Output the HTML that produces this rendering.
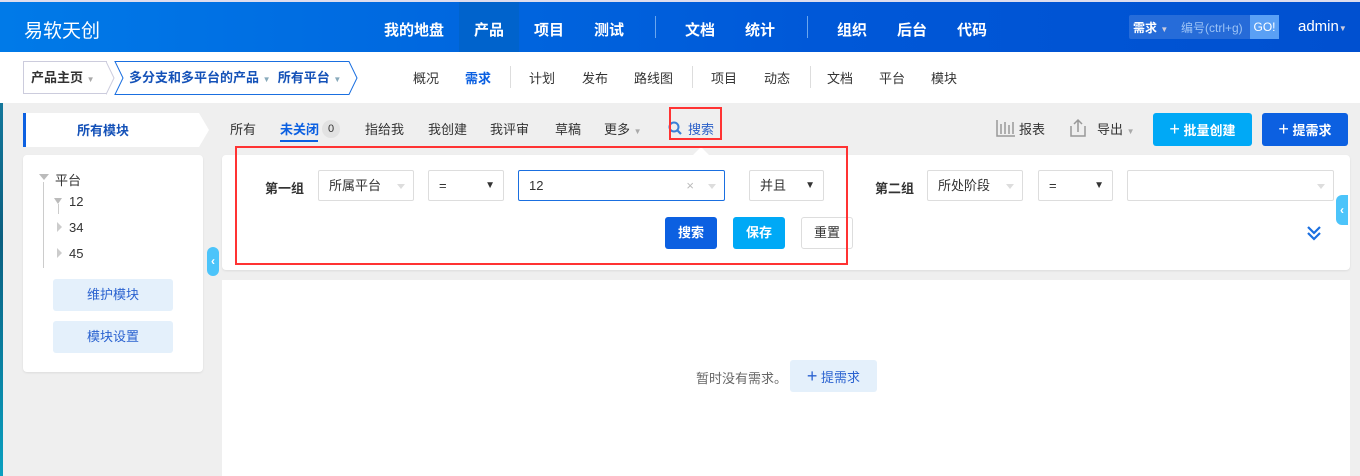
<!DOCTYPE html>
<html><head><meta charset="utf-8"><style>
*{margin:0;padding:0;box-sizing:border-box}
body{width:1360px;height:476px;overflow:hidden;background:#efefef;font-family:"Liberation Sans","Noto Sans CJK SC",sans-serif;font-size:13px;color:#333;position:relative}
.a{position:absolute}
.hdr{left:0;top:0;width:1360px;height:52px;background:linear-gradient(90deg,#007ae8,#0058d8 60%,#0050d0);border-top:2px solid #dde}
.hdr .t{color:#fff;font-size:15px;font-weight:bold;top:17px}
.sub{left:0;top:52px;width:1360px;height:51px;background:#fff}
.sub .t{top:16px;font-size:13px}
.sep{width:1px;background:#ddd}
.tab{top:119px;font-size:13px}
.panel{background:#fff;border-radius:4px;box-shadow:0 1px 2px rgba(0,0,0,.08)}
.sel{border:1px solid #ddd;border-radius:2px;height:31px;top:170px;background:#fff;padding:0 10px;line-height:29px;font-size:13px}
.btn{border-radius:3px;height:32px;top:217px;color:#fff;text-align:center;line-height:32px;font-size:13px}
.caret{border-left:4px solid transparent;border-right:4px solid transparent;border-top:5px solid #ccc;width:0;height:0}
.dt{position:absolute;right:8px;top:0;font-size:10px;line-height:29px}
</style></head><body>
<div class="a" style="left:0;top:0;width:3px;height:476px;background:linear-gradient(#1a8ab0,#0b5f80 50%,#0aa0c0)"></div>
<div class="a hdr">
<div class="a" style="left:459px;top:0;width:60px;height:50px;background:#0063cc"></div>
<div class="a t" style="left:24px;top:14px;font-size:19px;font-weight:normal">易软天创</div>
<div class="a t" style="left:384px">我的地盘</div>
<div class="a t" style="left:474px">产品</div>
<div class="a t" style="left:534px">项目</div>
<div class="a t" style="left:594px">测试</div>
<div class="a" style="left:655px;top:14px;width:1px;height:22px;background:#6aa6ee"></div>
<div class="a t" style="left:685px">文档</div>
<div class="a t" style="left:745px">统计</div>
<div class="a" style="left:807px;top:14px;width:1px;height:22px;background:#6aa6ee"></div>
<div class="a t" style="left:837px">组织</div>
<div class="a t" style="left:897px">后台</div>
<div class="a t" style="left:957px">代码</div>
<div class="a" style="left:1129px;top:13px;width:150px;height:24px;background:rgba(255,255,255,.15);border-radius:2px"></div>
<div class="a" style="left:1133px;top:17px;color:#fff;font-size:12px;font-weight:bold">需求 <span style="font-size:8px;color:#ccd">▼</span></div>
<div class="a" style="left:1181px;top:17px;color:#9cc3f5;font-size:12px">编号(ctrl+g)</div>
<div class="a" style="left:1250px;top:13px;width:29px;height:24px;background:#5aa0f5;color:#fff;font-size:12px;line-height:24px;text-align:center">GO!</div>
<div class="a" style="left:1298px;top:16px;color:#fff;font-size:15px">admin<span style="font-size:8px;color:#ccd">▼</span></div>
</div>
<div class="a sub">
<div class="a" style="left:23px;top:9px;width:84px;height:33px;border:1px solid #ccd;border-right:none;padding:0 7px;line-height:31px;font-weight:bold">产品主页 <span style="color:#aaa;font-size:8px">▼</span></div>
<svg class="a" style="left:106px;top:9px" width="254" height="34"><path d="M0 0.5 L8 17 L0 33.5" fill="none" stroke="#ccd"/><path d="M9 0.5 H243 L251 17 L243 33.5 H9 L17 17 Z" fill="#fff" stroke="#1a6fe0"/></svg>
<div class="a" style="left:129px;top:9px;line-height:33px;color:#1552b8;font-weight:bold">多分支和多平台的产品 <span style="font-size:8px;color:#8ab">▼</span> &nbsp;所有平台 <span style="font-size:8px;color:#8ab">▼</span></div>
<div class="a t" style="left:413px">概况</div>
<div class="a t" style="left:465px;color:#0c60e1;font-weight:bold">需求</div>
<div class="a sep" style="left:510px;top:14px;height:22px"></div>
<div class="a t" style="left:529px">计划</div>
<div class="a t" style="left:582px">发布</div>
<div class="a t" style="left:634px">路线图</div>
<div class="a sep" style="left:692px;top:14px;height:22px"></div>
<div class="a t" style="left:711px">项目</div>
<div class="a t" style="left:764px">动态</div>
<div class="a sep" style="left:810px;top:14px;height:22px"></div>
<div class="a t" style="left:827px">文档</div>
<div class="a t" style="left:879px">平台</div>
<div class="a t" style="left:931px">模块</div>
</div>
<svg class="a" style="left:23px;top:113px" width="190" height="34"><path d="M0 0 H176 L186 17 L176 34 H0Z" fill="#fff"/><rect x="0" y="0" width="3" height="34" fill="#0c60e1"/></svg>
<div class="a" style="left:77px;top:120px;color:#1552b8;font-weight:bold;font-size:13px">所有模块</div>
<div class="a tab" style="left:230px">所有</div>
<div class="a tab" style="left:280px;color:#0c60e1;font-weight:bold">未关闭</div>
<div class="a" style="left:280px;top:140px;width:38px;height:2px;background:#0c60e1"></div>
<div class="a" style="left:322px;top:120px;width:18px;height:18px;border-radius:9px;background:#e2e2e2;font-size:11px;text-align:center;line-height:18px">0</div>
<div class="a tab" style="left:365px">指给我</div>
<div class="a tab" style="left:428px">我创建</div>
<div class="a tab" style="left:490px">我评审</div>
<div class="a tab" style="left:555px">草稿</div>
<div class="a tab" style="left:604px">更多 <span style="font-size:8px;color:#aaa">▼</span></div>
<svg class="a" style="left:668px;top:121px" width="16" height="16"><circle cx="6" cy="6" r="4.5" fill="none" stroke="#3a7fd8" stroke-width="2"/><path d="M9.5 9.5L13 13" stroke="#3a7fd8" stroke-width="2.2"/></svg>
<div class="a tab" style="left:688px;color:#2a5fc8">搜索</div>
<div class="a" style="left:669px;top:107px;width:53px;height:33px;border:2px solid #f33"></div>
<svg class="a" style="left:996px;top:119px" width="20" height="18"><path d="M1 1V17H19M5 5V15M9 3V15M13 6V15M17 3V15" stroke="#999" stroke-width="1.5" fill="none"/></svg>
<div class="a tab" style="left:1019px">报表</div>
<svg class="a" style="left:1068px;top:118px" width="20" height="20"><path d="M3 8V18H17V8M10 14V2M6 6L10 2L14 6" stroke="#999" stroke-width="1.5" fill="none"/></svg>
<div class="a tab" style="left:1097px">导出 <span style="font-size:8px;color:#aaa">▼</span></div>
<div class="a" style="left:1153px;top:113px;width:99px;height:33px;background:#00a9f6;border-radius:3px;color:#fff;font-weight:bold;line-height:33px;text-align:center"><span style="font-size:18px;font-weight:normal">+</span> 批量创建</div>
<div class="a" style="left:1262px;top:113px;width:86px;height:33px;background:#0c60e1;border-radius:3px;color:#fff;font-weight:bold;line-height:33px;text-align:center"><span style="font-size:18px;font-weight:normal">+</span> 提需求</div>

<div class="a panel" style="left:23px;top:155px;width:180px;height:217px"></div>
<div class="a" style="left:39px;top:174px;width:0;height:0;border-left:5px solid transparent;border-right:5px solid transparent;border-top:6px solid #bbb"></div>
<div class="a" style="left:55px;top:170px">平台</div>
<div class="a" style="left:43px;top:182px;width:1px;height:86px;background:#ccc"></div>
<div class="a" style="left:54px;top:198px;width:0;height:0;border-left:4px solid transparent;border-right:4px solid transparent;border-top:6px solid #bbb"></div>
<div class="a" style="left:58px;top:204px;width:1px;height:10px;background:#ccc"></div>
<div class="a" style="left:69px;top:194px">12</div>
<div class="a" style="left:57px;top:222px;width:0;height:0;border-top:5px solid transparent;border-bottom:5px solid transparent;border-left:5px solid #ccc"></div>
<div class="a" style="left:69px;top:220px">34</div>
<div class="a" style="left:57px;top:248px;width:0;height:0;border-top:5px solid transparent;border-bottom:5px solid transparent;border-left:5px solid #ccc"></div>
<div class="a" style="left:69px;top:246px">45</div>
<div class="a" style="left:53px;top:279px;width:120px;height:32px;background:#e4f0fb;border-radius:3px;color:#2a62d0;text-align:center;line-height:32px">维护模块</div>
<div class="a" style="left:53px;top:321px;width:120px;height:32px;background:#e4f0fb;border-radius:3px;color:#2a62d0;text-align:center;line-height:32px">模块设置</div>
<div class="a" style="left:207px;top:247px;width:12px;height:29px;background:#4cc4fa;border-radius:6px;color:#fff;font-size:12px;line-height:29px;text-align:center;font-weight:bold">‹</div>

<div class="a panel" style="left:222px;top:155px;width:1128px;height:115px"></div>
<div class="a" style="left:693px;top:147px;width:0;height:0;border-left:8px solid transparent;border-right:8px solid transparent;border-bottom:8px solid #fff"></div>
<div class="a" style="left:265px;top:178px;font-weight:bold">第一组</div>
<div class="a sel" style="left:318px;width:96px">所属平台<div class="a caret" style="right:8px;top:13px;border-top-color:#ddd"></div></div>
<div class="a sel" style="left:428px;width:76px">=<div class="dt">▼</div></div>
<div class="a sel" style="left:518px;width:207px;border-color:#1a6fe0">12<div class="a" style="right:30px;top:0;color:#bbb">×</div><div class="a caret" style="right:8px;top:13px;border-top-color:#ddd"></div></div>
<div class="a sel" style="left:749px;width:75px">并且<div class="dt">▼</div></div>
<div class="a" style="left:875px;top:178px;font-weight:bold">第二组</div>
<div class="a sel" style="left:927px;width:96px">所处阶段<div class="a caret" style="right:8px;top:13px;border-top-color:#ddd"></div></div>
<div class="a sel" style="left:1038px;width:75px">=<div class="dt">▼</div></div>
<div class="a sel" style="left:1127px;width:207px"><div class="a caret" style="right:8px;top:13px;border-top-color:#ddd"></div></div>
<div class="a btn" style="left:665px;width:52px;background:#0c60e1;font-weight:bold">搜索</div>
<div class="a btn" style="left:733px;width:52px;background:#00a9f6;font-weight:bold">保存</div>
<div class="a btn" style="left:801px;width:52px;background:#fff;border:1px solid #ddd;color:#333;line-height:30px">重置</div>
<svg class="a" style="left:1305px;top:224px" width="18" height="18"><path d="M3 3L9 9L15 3M3 9L9 15L15 9" stroke="#1a6fe0" stroke-width="2.2" fill="none"/></svg>
<div class="a" style="left:1336px;top:195px;width:12px;height:30px;background:#4cc4fa;border-radius:6px 0 0 6px;color:#fff;font-size:12px;line-height:30px;text-align:center;font-weight:bold">‹</div>
<div class="a" style="left:235px;top:146px;width:613px;height:119px;border:2px solid #f33"></div>

<div class="a" style="left:222px;top:280px;width:1128px;height:196px;background:#fff"></div>
<div class="a" style="left:696px;top:368px;color:#666">暂时没有需求。</div>
<div class="a" style="left:790px;top:360px;width:87px;height:32px;background:#e4f0fb;border-radius:3px;color:#2a62d0;text-align:center;line-height:32px"><span style="font-size:18px">+</span> 提需求</div>
</body></html>
